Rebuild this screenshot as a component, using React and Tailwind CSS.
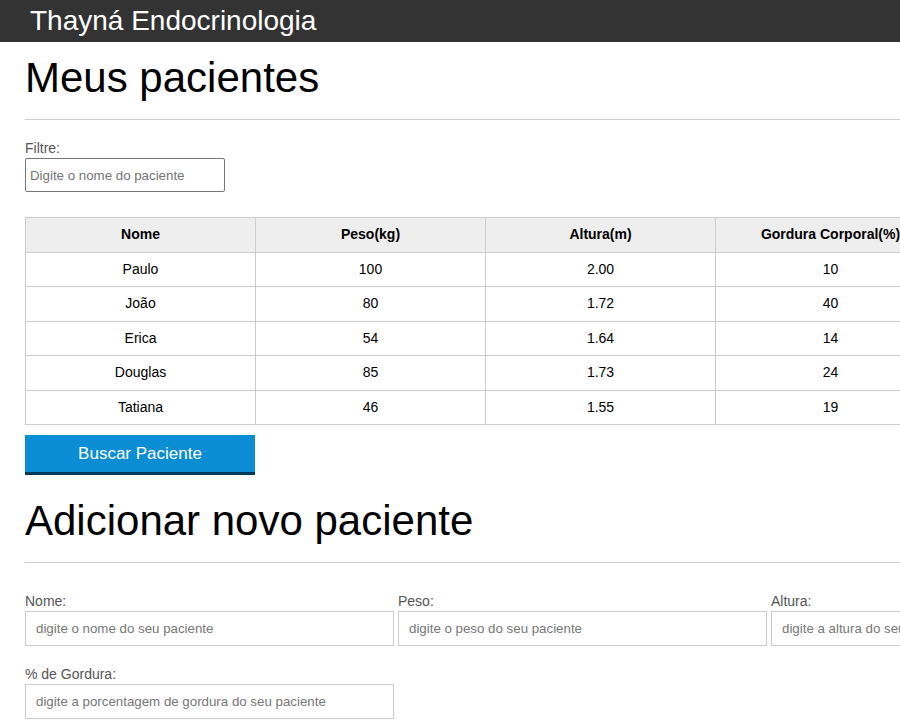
import React from 'react'

const pacientes = [
  { nome: 'Paulo', peso: '100', altura: '2.00', gordura: '10' },
  { nome: 'João', peso: '80', altura: '1.72', gordura: '40' },
  { nome: 'Erica', peso: '54', altura: '1.64', gordura: '14' },
  { nome: 'Douglas', peso: '85', altura: '1.73', gordura: '24' },
  { nome: 'Tatiana', peso: '46', altura: '1.55', gordura: '19' },
]

const colunas = ['Nome', 'Peso(kg)', 'Altura(m)', 'Gordura Corporal(%)']

function Campo({ label, placeholder }) {
  return (
    <div className="w-[369px] shrink-0">
      <label className="block text-[14px] leading-4 text-[#555]">{label}</label>
      <input
        type="text"
        placeholder={placeholder}
        className="mt-[2px] block h-[35px] w-full border border-[#ccc] bg-white px-[10px] text-[13.3px] text-[#333] placeholder:text-[#777] outline-none"
      />
    </div>
  )
}

export default function App() {
  return (
    <div className="h-[720px] w-[900px] overflow-hidden bg-white font-['Liberation_Sans',Arial,sans-serif]">
      <header className="flex h-[42px] items-center bg-[#333] pl-[30px]">
        <span className="text-[28px] leading-8 text-white">Thayná Endocrinologia</span>
      </header>

      <main className="w-[960px] pl-[25px]">
        <section>
          <h1 className="mt-[12px] text-[42px] leading-[48px] text-black">Meus pacientes</h1>
          <hr className="mt-[17px] border-t border-[#ccc]" />

          <label className="mt-[20px] block text-[14px] leading-4 text-[#555]">Filtre:</label>
          <input
            type="text"
            placeholder="Digite o nome do paciente"
            className="mt-[2px] block h-[34px] w-[200px] rounded-[2px] border border-[#767676] px-[4px] text-[13.3px] placeholder:text-[#757575] outline-none"
          />

          <table className="mt-[25px] w-[921px] table-fixed border-collapse text-[14px] text-black">
            <thead>
              <tr className="bg-[#eee]">
                {colunas.map((c) => (
                  <th
                    key={c}
                    className="h-[34.5px] w-[230px] border border-[#ccc] p-0 text-center text-[14px] font-bold"
                  >
                    {c}
                  </th>
                ))}
              </tr>
            </thead>
            <tbody>
              {pacientes.map((p) => (
                <tr key={p.nome}>
                  <td className="h-[34.5px] border border-[#ccc] p-0 text-center">{p.nome}</td>
                  <td className="h-[34.5px] border border-[#ccc] p-0 text-center">{p.peso}</td>
                  <td className="h-[34.5px] border border-[#ccc] p-0 text-center">{p.altura}</td>
                  <td className="h-[34.5px] border border-[#ccc] p-0 text-center">{p.gordura}</td>
                </tr>
              ))}
            </tbody>
          </table>

          <button
            type="button"
            className="mt-[10px] block h-[40px] w-[230px] border-b-[3px] border-[#00395a] bg-[#0b8dd3] text-[17px] text-white"
          >
            Buscar Paciente
          </button>
        </section>

        <section>
          <h2 className="mt-[22px] text-[42px] leading-[48px] text-black">Adicionar novo paciente</h2>
          <hr className="mt-[17px] border-t border-[#ccc]" />

          <form className="mt-[30px]">
            <div className="flex gap-[4px]">
              <Campo label="Nome:" placeholder="digite o nome do seu paciente" />
              <Campo label="Peso:" placeholder="digite o peso do seu paciente" />
              <Campo label="Altura:" placeholder="digite a altura do seu paciente" />
            </div>
            <div className="mt-[20px] flex">
              <Campo label="% de Gordura:" placeholder="digite a porcentagem de gordura do seu paciente" />
            </div>
          </form>
        </section>
      </main>
    </div>
  )
}
